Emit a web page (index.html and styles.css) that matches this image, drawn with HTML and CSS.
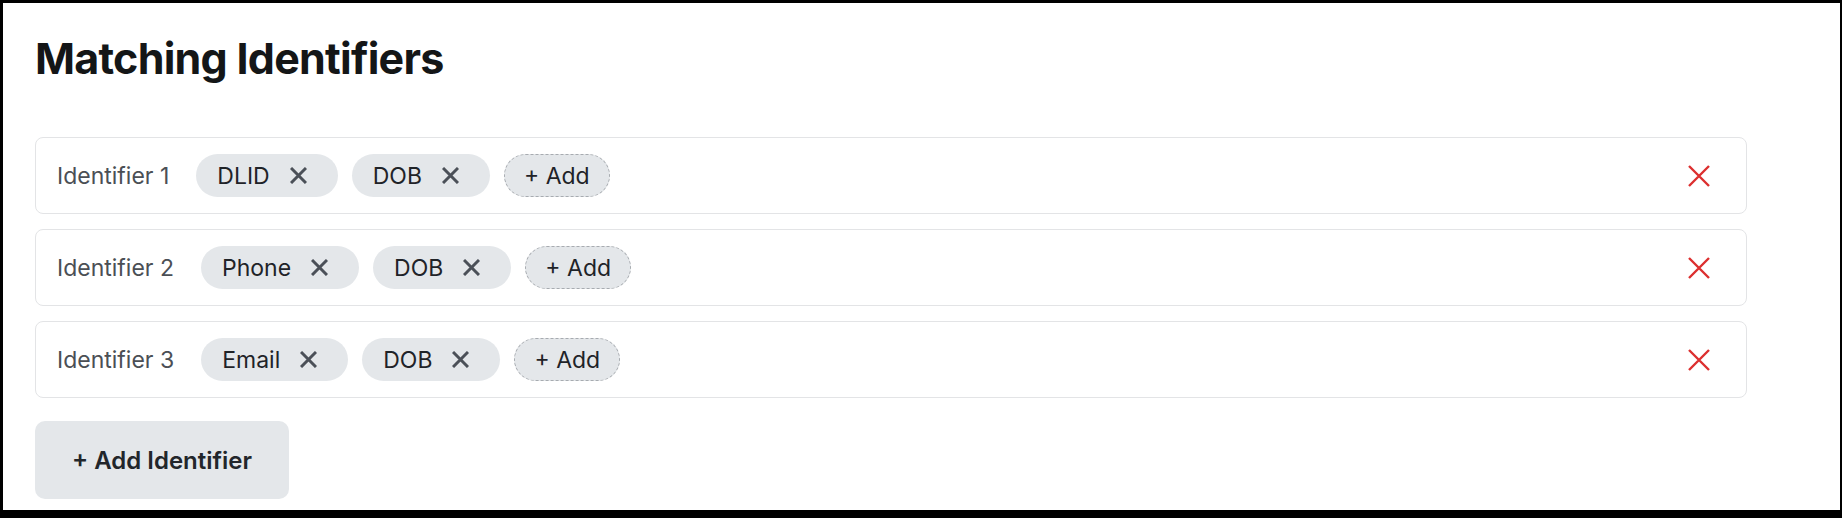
FILE: index.html
```html
<!DOCTYPE html>
<html lang="en">
<head>
    <meta charset="UTF-8">
    <meta name="viewport" content="width=device-width, initial-scale=1.0">
    <title>Matching Identifiers</title>
    <link rel="stylesheet" href="styles.css">
</head>
<body>
    <div class="container">
        <h1>Matching Identifiers</h1>

        <div class="identifier-list">
            <div class="identifier-row">
                <span class="identifier-label">Identifier 1</span>
                <div class="chips">
                    <span class="chip">DLID
                        <svg class="chip-remove" viewBox="0 0 17 17"><path d="M1 1L16 16M16 1L1 16"/></svg>
                    </span>
                    <span class="chip">DOB
                        <svg class="chip-remove" viewBox="0 0 17 17"><path d="M1 1L16 16M16 1L1 16"/></svg>
                    </span>
                    <button class="chip add-chip">+ Add</button>
                </div>
                <button class="row-remove" title="Remove identifier">
                    <svg viewBox="0 0 22 22"><path d="M1 1L21 21M21 1L1 21"/></svg>
                </button>
            </div>

            <div class="identifier-row">
                <span class="identifier-label">Identifier 2</span>
                <div class="chips">
                    <span class="chip">Phone
                        <svg class="chip-remove" viewBox="0 0 17 17"><path d="M1 1L16 16M16 1L1 16"/></svg>
                    </span>
                    <span class="chip">DOB
                        <svg class="chip-remove" viewBox="0 0 17 17"><path d="M1 1L16 16M16 1L1 16"/></svg>
                    </span>
                    <button class="chip add-chip">+ Add</button>
                </div>
                <button class="row-remove" title="Remove identifier">
                    <svg viewBox="0 0 22 22"><path d="M1 1L21 21M21 1L1 21"/></svg>
                </button>
            </div>

            <div class="identifier-row">
                <span class="identifier-label">Identifier 3</span>
                <div class="chips">
                    <span class="chip">Email
                        <svg class="chip-remove" viewBox="0 0 17 17"><path d="M1 1L16 16M16 1L1 16"/></svg>
                    </span>
                    <span class="chip">DOB
                        <svg class="chip-remove" viewBox="0 0 17 17"><path d="M1 1L16 16M16 1L1 16"/></svg>
                    </span>
                    <button class="chip add-chip">+ Add</button>
                </div>
                <button class="row-remove" title="Remove identifier">
                    <svg viewBox="0 0 22 22"><path d="M1 1L21 21M21 1L1 21"/></svg>
                </button>
            </div>
        </div>

        <button class="add-identifier">+ Add Identifier</button>
    </div>
</body>
</html>
```

FILE: styles.css
```css
* {
    box-sizing: border-box;
}

html {
    background: #000;
}

body {
    margin: 0;
    height: 100vh;
    overflow: hidden;
    background: #fff;
    border-style: solid;
    border-color: #000;
    border-width: 3px 2px 8px 3px;
    font-family: 'Inter', 'Liberation Sans', Arial, sans-serif;
    color: #1f2328;
}

.container {
    padding: 29px 32px 0 32px;
    width: 1776px;
}

h1 {
    margin: 0 0 53px 0;
    font-size: 43px;
    line-height: 52px;
    font-weight: 700;
    letter-spacing: -0.75px;
    color: #141617;
}

.identifier-list {
    display: flex;
    flex-direction: column;
    gap: 15px;
}

.identifier-row {
    display: flex;
    align-items: center;
    height: 77px;
    padding: 0 36px 0 21px;
    border: 1px solid #e3e4e6;
    border-radius: 8px;
    background: #fff;
}

.identifier-label {
    font-size: 23px;
    color: #4b4f55;
    margin-right: 27px;
}

.chips {
    display: flex;
    align-items: center;
    gap: 14px;
}

.chip {
    display: flex;
    align-items: center;
    gap: 20px;
    height: 43px;
    padding: 0 31px 0 21px;
    border-radius: 22px;
    background: #e4e7ea;
    font-family: inherit;
    font-size: 23px;
    color: #1f2328;
}

.chip-remove {
    width: 17px;
    height: 17px;
    fill: none;
    stroke: #4b5058;
    stroke-width: 3;
}

.add-chip {
    padding: 0 19px;
    border: 1px dashed #a7abb0;
    cursor: pointer;
}

.row-remove {
    margin-left: auto;
    padding: 0;
    border: none;
    background: none;
    cursor: pointer;
    display: flex;
}

.row-remove svg {
    width: 22px;
    height: 22px;
    fill: none;
    stroke: #dc2f2f;
    stroke-width: 2.4;
}

.add-identifier {
    margin-top: 23px;
    height: 78px;
    padding: 0 37px;
    border: none;
    border-radius: 10px;
    background: #e4e7ea;
    font-family: inherit;
    font-size: 24px;
    font-weight: 600;
    color: #22262b;
    cursor: pointer;
}
```
